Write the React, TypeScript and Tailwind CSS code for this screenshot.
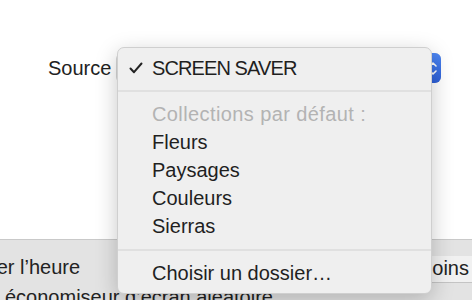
import React from 'react';

const items = ['Fleurs', 'Paysages', 'Couleurs', 'Sierras'];

function Check() {
  return <svg width="14" height="12" viewBox="0 0 14 12" fill="none">
      <path d="M1.5 6.5 L5 10.2 L12.5 1.5" stroke="#222" strokeWidth="2" strokeLinecap="round" strokeLinejoin="round" />
    </svg>;
}

function PopupMenu() {
  return <div className="absolute left-[117px] top-[47px] w-[315px] rounded-[7px] border border-[#cfcfcf] bg-[#efefef] pt-[6px] pb-[6px] shadow-[0_6px_22px_rgba(0,0,0,0.22)]">
      <div className="flex h-[28px] items-center leading-[28px]">
        <div className="flex w-[34px] justify-center pl-[2px]">
          <Check />
        </div>
        <span className="tracking-[-0.9px] text-[#1f1f1f]">SCREEN SAVER</span>
      </div>
      <div className="mt-[8px] h-[2px] bg-[#e0e0e0]" />
      <div className="mt-[8px] h-[28px] pl-[34px] leading-[28px] tracking-[0.4px] text-[#b3b3b3]">
        Collections par défaut :
      </div>
      {items.map(item => <div key={item} className="h-[28px] pl-[34px] leading-[28px] text-[#1f1f1f]">
          {item}
        </div>)}
      <div className="mt-[9px] h-[2px] bg-[#e0e0e0]" />
      <div className="mt-[8px] h-[28px] pl-[34px] leading-[28px] text-[#1f1f1f]">
        Choisir un dossier…
      </div>
    </div>;
}

export default function App() {
  return <div className="relative h-[300px] w-[472px] overflow-hidden bg-white text-[20px] text-[#222] font-['Liberation_Sans',Arial,sans-serif]">
      {/* top panel */}
      <div className="h-[239px] pl-[48px] pt-[53px]">
        <div className="flex h-[30px] items-center">
          <span className="leading-[30px]">Source</span>
          <div className="ml-[5px] flex h-[30px] w-[325px] justify-end rounded-[6px] border border-[#d6d6d6] bg-white">
            <div className="-my-px -mr-px flex w-[17px] flex-col items-center justify-center gap-[3px] rounded-r-[6px] bg-gradient-to-b from-[#4d86f2] to-[#2d5fd8]">
              <svg width="8" height="5" viewBox="0 0 8 5" fill="none">
                <path d="M1 4 L4 1 L7 4" stroke="white" strokeWidth="1.6" strokeLinecap="round" strokeLinejoin="round" />
              </svg>
              <svg width="8" height="5" viewBox="0 0 8 5" fill="none">
                <path d="M1 1 L4 4 L7 1" stroke="white" strokeWidth="1.6" strokeLinecap="round" strokeLinejoin="round" />
              </svg>
            </div>
          </div>
        </div>
      </div>
      {/* lower band */}
      <div className="h-[61px] border-t border-[#c9c9c9] bg-[#e3e3e3] pt-[13px]">
        <div className="flex items-start justify-between">
          <span className="-ml-[53px] leading-[28px]">Afficher l’heure</span>
          <div className="-mr-[14px] mt-[3px] h-[27px] border-b border-[#c4c4c4] bg-[#f1f1f1] pl-[20px] pr-[17px] leading-[24px]">
            Plus ou moins
          </div>
        </div>
        <div className="pl-[5px] leading-[28px]">économiseur d’écran aléatoire</div>
      </div>
      <PopupMenu />
    </div>;
}
